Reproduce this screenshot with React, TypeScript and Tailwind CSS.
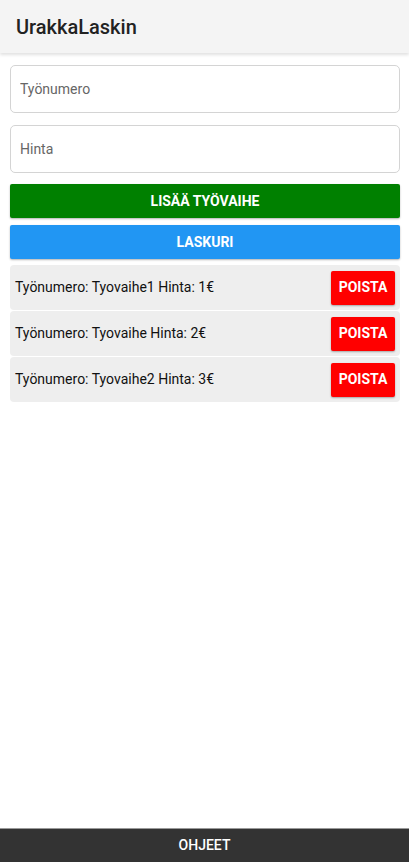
const items = [
  { nro: "Tyovaihe1", hinta: 1 },
  { nro: "Tyovaihe", hinta: 2 },
  { nro: "Tyovaihe2", hinta: 3 },
]

export default function App() {
  return (
    <div className="min-h-[862px] flex flex-col bg-white font-['Roboto',sans-serif]">
      <header className="h-[53px] bg-[#f4f4f4] flex items-center px-4 shadow-[0_2px_3px_rgba(0,0,0,0.12)]">
        <h1 className="text-[20px] text-[#222] font-medium">UrakkaLaskin</h1>
      </header>

      <div className="pl-[10px] pr-[9px] pt-[12px] flex flex-col">
        <input
          placeholder="Työnumero"
          className="h-[48px] px-[9px] rounded-[5px] border border-[#d4d4d4] text-[14px] placeholder:text-[#666] outline-none"
        />
        <input
          placeholder="Hinta"
          className="h-[48px] mt-[12px] px-[9px] rounded-[5px] border border-[#d4d4d4] text-[14px] placeholder:text-[#666] outline-none"
        />
        <button className="h-[34px] mt-[11px] bg-[#008000] text-white text-[14px] font-bold rounded-[2px] shadow-[0_1px_2px_rgba(0,0,0,0.3)]">
          LISÄÄ TYÖVAIHE
        </button>
        <button className="h-[34px] mt-[7px] bg-[#2196f3] text-white text-[14px] font-bold rounded-[2px] shadow-[0_1px_2px_rgba(0,0,0,0.3)]">
          LASKURI
        </button>

        <ul className="mt-[6px] flex flex-col gap-[1px]">
          {items.map((it) => (
            <li
              key={it.nro}
              className="h-[45px] bg-[#eeeeee] rounded-[4px] flex items-center justify-between pl-[5px] pr-[5px]"
            >
              <span className="text-[14px] text-[#111]">
                Työnumero: {it.nro} Hinta: {it.hinta}€
              </span>
              <button className="h-[34px] w-[64px] bg-[#ff0000] text-white text-[14px] font-bold rounded-[2px] shadow-[0_1px_2px_rgba(0,0,0,0.3)]">
                POISTA
              </button>
            </li>
          ))}
        </ul>
      </div>

      <footer className="mt-auto h-[34px] bg-[#333333] border-t border-[#999] flex items-center justify-center">
        <span className="text-white text-[14px] font-medium">OHJEET</span>
      </footer>
    </div>
  )
}
